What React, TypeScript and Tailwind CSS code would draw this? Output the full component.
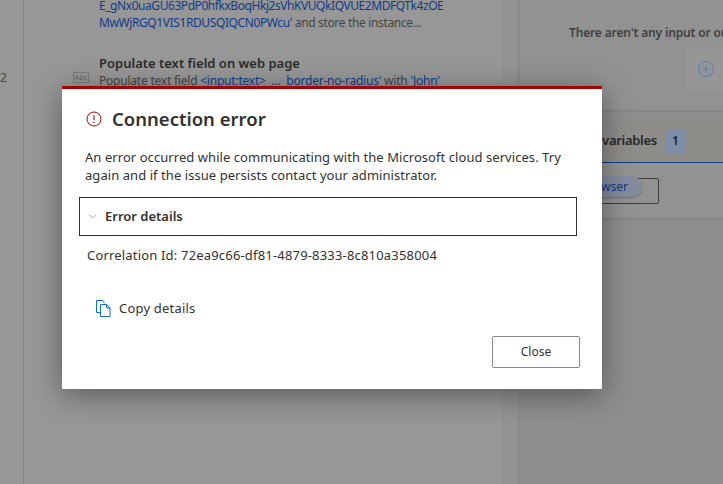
import { ChevronDown } from "lucide-react";

const uiFont = "font-['Noto_Sans','Open_Sans',sans-serif]";

function ErrorIcon() {
  return (
    <svg width="16" height="16" viewBox="0 0 16 16" fill="none" className="shrink-0">
      <circle cx="8" cy="8" r="7" stroke="#a80000" strokeWidth="1" />
      <path d="M8 4.2v5" stroke="#a80000" strokeWidth="1.1" />
      <circle cx="8" cy="11.2" r="0.7" fill="#a80000" />
    </svg>
  );
}

function CopyIcon() {
  return (
    <svg width="15" height="17" viewBox="0 0 15 17" fill="none" className="shrink-0">
      <path d="M4.5 12.5H.5V.5h6l2 2.5" stroke="#0f6cdb" strokeWidth="1" />
      <path d="M4.5 4.5h6l3.5 3.5v8.5H4.5z" stroke="#0f6cdb" strokeWidth="1" />
      <path d="M10.5 4.5v3.5H14" stroke="#0f6cdb" strokeWidth="1" />
    </svg>
  );
}

function Background() {
  return (
    <div className="flex h-[484px] w-[723px] overflow-hidden bg-[#979797] text-[#2e2e2e]">
      {/* line numbers */}
      <div className="w-[24px] shrink-0 border-r border-[#858585] pt-[69px] text-[12px] leading-[18px] text-[#444]">2</div>

      {/* action list */}
      <div className="w-[478px] shrink-0 pl-[75px] pr-2 text-[12px] leading-[17px]">
        <div className="-mt-[3px] whitespace-nowrap tracking-[-0.44px] text-[#0f3a8a]">E_gNx0uaGU63PdP0hfkxBoqHkj2sVhKVUQkIQVUE2MDFQTk4zOE</div>
        <div className="whitespace-nowrap">
          <span className="tracking-[-0.4px] text-[#0f3a8a]">MwWjRGQ1VIS1RDUSQIQCN0PWcu'</span>
          <span className="tracking-[-0.34px] text-[#444]"> and store the instance...</span>
        </div>
        <div className="relative mt-[23px]">
          <div className="text-[13px] leading-[18px] font-semibold text-[#2b2b2b]">Populate text field on web page</div>
          <div className="whitespace-nowrap tracking-[-0.22px] text-[#444]">
            Populate text field <span className="text-[#0f3a8a]">&lt;input:text&gt;&nbsp; ...&nbsp; border-no-radius'</span> with <span className="text-[#0f3a8a]">'John'</span>
          </div>
          <div className="absolute -left-[26px] top-[18px] flex h-[11px] w-[16px] items-center justify-center border border-[#7c7c7c] text-[7px] leading-none font-bold text-[#777]">Abc</div>
        </div>
      </div>

      {/* splitter */}
      <div className="w-[17px] shrink-0 border-r border-[#8a8a8a] bg-[#939393]" />

      {/* right panel */}
      <div className="flex w-[400px] shrink-0 flex-col bg-[#8e8e8e]">
        <div className="h-[110px] shrink-0 bg-[#929292] pt-[24px] pl-[50px] shadow-[0_1px_2px_rgba(0,0,0,0.12)]">
          <div className="whitespace-nowrap text-[12px] leading-[18px] font-semibold tracking-[-0.15px] text-[#3f3f3f]">There aren't any input or output variables</div>
          <div className="mt-[6px] ml-[116px] flex h-[42px] w-[42px] items-center justify-center bg-[#969696]">
            <svg width="16" height="16" viewBox="0 0 16 16" fill="none">
              <circle cx="8" cy="8" r="7.5" stroke="#5a7cb8" />
              <path d="M8 4v8M4 8h8" stroke="#5a7cb8" />
            </svg>
          </div>
        </div>
        <div className="mt-[9px] flex h-[44px] shrink-0 items-center gap-[8px] border-b border-[#123f86] bg-[#8f8d8a] pl-[52px]">
          <span className="text-[13px] font-semibold tracking-[-0.3px] text-[#262626]">Flow variables</span>
          <span className="flex h-[24px] w-[21px] items-center justify-center bg-[#7e8ea6] text-[12px] font-semibold text-[#222]">1</span>
        </div>
        <div className="h-[55px] shrink-0 bg-[#929292] pt-[15px] pl-[20px] shadow-[0_1px_2px_rgba(0,0,0,0.12)]">
          <div className="h-[26px] w-[120px] rounded-[2px] border border-[#3c3c3c]">
            <div className="-mt-[3px] flex h-[21px] w-[102px] items-center justify-end rounded-full bg-[#838c9c] pr-[14px] text-[12px] text-[#0f3a8a] shadow-[0_1px_2px_rgba(0,0,0,0.25)]">
              Browser
            </div>
          </div>
        </div>
      </div>
    </div>
  );
}

export default function App() {
  return (
    <div className={`relative h-[484px] w-[723px] overflow-hidden ${uiFont}`}>
      <Background />

      {/* dialog */}
      <div className="absolute top-[86px] left-[62px] flex h-[303px] w-[540px] flex-col border-t-[3px] border-[#a80000] bg-white px-[17px] text-[#323130] shadow-[0_6px_28px_rgba(0,0,0,0.4)]">
        <div className="mt-[17px] flex items-center gap-[10px] pl-[7px]">
          <ErrorIcon />
          <h1 className="text-[18.5px] leading-[26px] font-semibold">Connection error</h1>
        </div>
        <p className="mt-[16px] pl-[6px] text-[13px] leading-[18px] tracking-[0.06px]">
          An error occurred while communicating with the Microsoft cloud services. Try
          <br />
          again and if the issue persists contact your administrator.
        </p>
        <div className="mt-[13px] flex h-[39px] w-[498px] items-center gap-[6px] border border-[#323130] pl-[6px]">
          <ChevronDown size={13} strokeWidth={1} className="text-[#605e5c]" />
          <span className="text-[13px] font-semibold">Error details</span>
        </div>
        <div className="mt-[10px] pl-[8px] text-[13px] leading-[18px] tracking-[0.18px]">
          Correlation Id: 72ea9c66-df81-4879-8333-8c810a358004
        </div>
        <div className="mt-[35px] flex items-center gap-[8px] pl-[17px]">
          <CopyIcon />
          <span className="text-[13px] tracking-[0.2px]">Copy details</span>
        </div>
        <div className="mt-auto mb-[21px] flex justify-end pr-[5px]">
          <button className="h-[32px] w-[88px] rounded-[2px] border border-[#8a8886] text-[12px] text-[#323130]">Close</button>
        </div>
      </div>
    </div>
  );
}
